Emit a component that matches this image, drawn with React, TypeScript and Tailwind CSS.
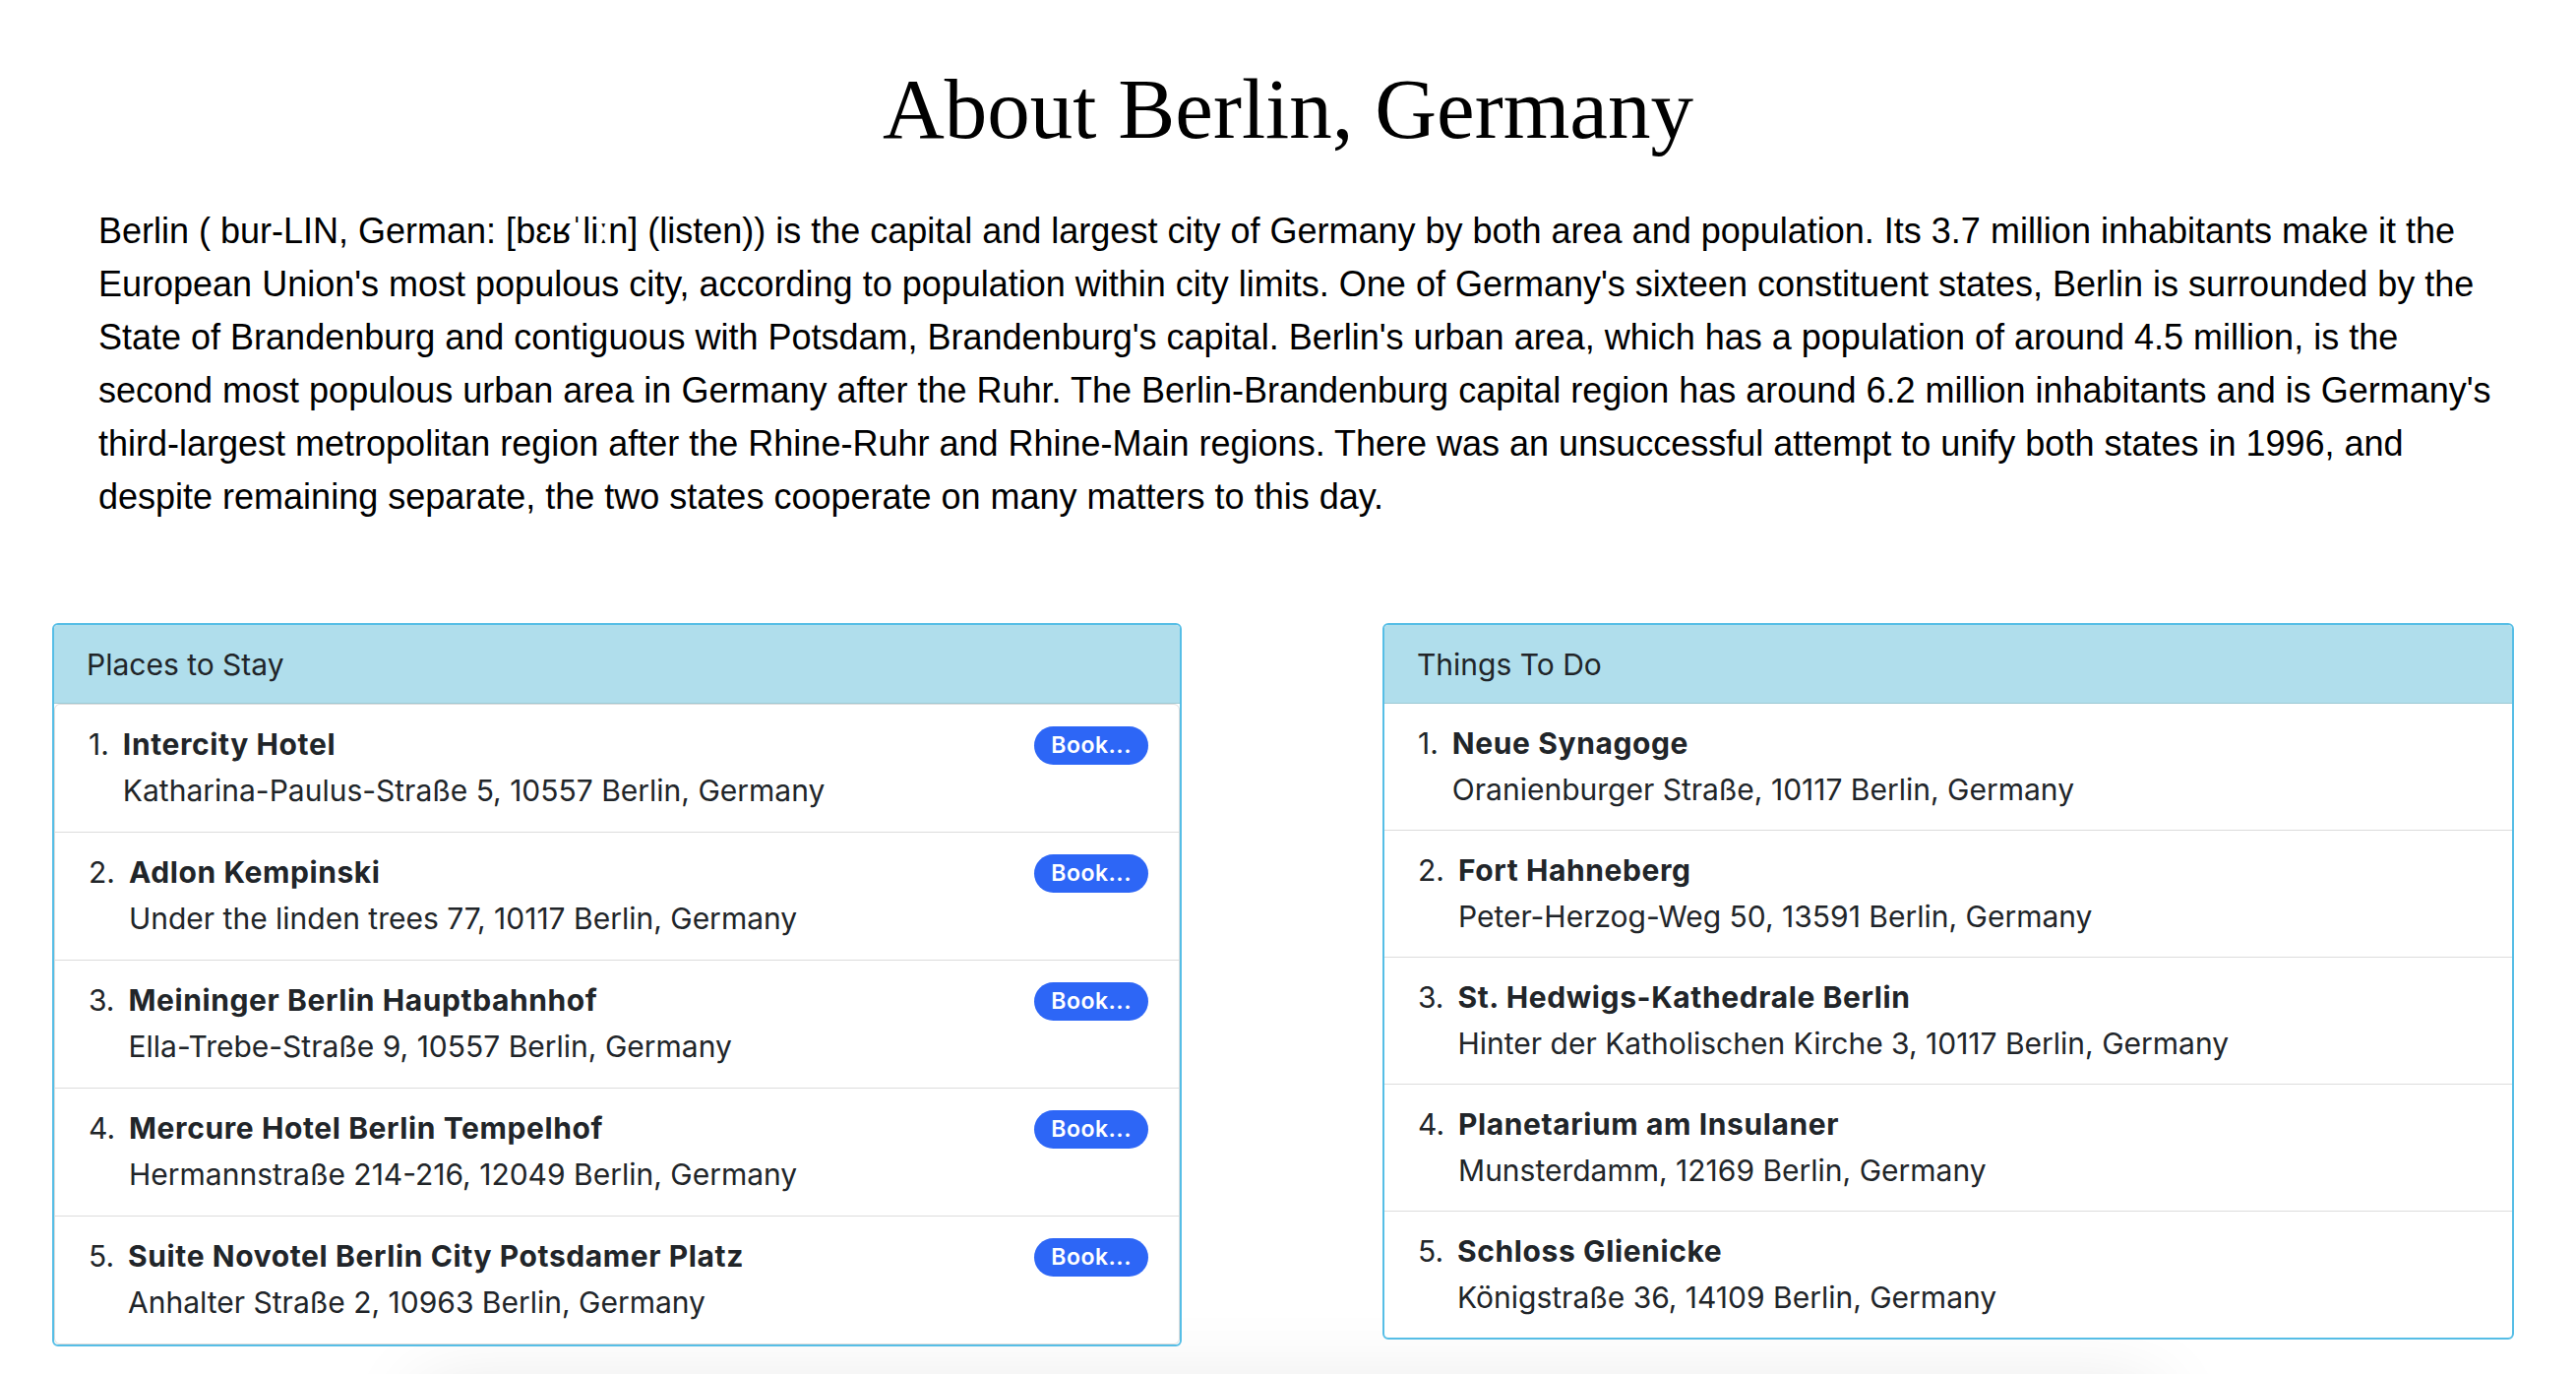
const places = [
  { name: "Intercity Hotel", address: "Katharina-Paulus-Straße 5, 10557 Berlin, Germany" },
  { name: "Adlon Kempinski", address: "Under the linden trees 77, 10117 Berlin, Germany" },
  { name: "Meininger Berlin Hauptbahnhof", address: "Ella-Trebe-Straße 9, 10557 Berlin, Germany" },
  { name: "Mercure Hotel Berlin Tempelhof", address: "Hermannstraße 214-216, 12049 Berlin, Germany" },
  { name: "Suite Novotel Berlin City Potsdamer Platz", address: "Anhalter Straße 2, 10963 Berlin, Germany" },
];

const things = [
  { name: "Neue Synagoge", address: "Oranienburger Straße, 10117 Berlin, Germany" },
  { name: "Fort Hahneberg", address: "Peter-Herzog-Weg 50, 13591 Berlin, Germany" },
  { name: "St. Hedwigs-Kathedrale Berlin", address: "Hinter der Katholischen Kirche 3, 10117 Berlin, Germany" },
  { name: "Planetarium am Insulaner", address: "Munsterdamm, 12169 Berlin, Germany" },
  { name: "Schloss Glienicke", address: "Königstraße 36, 14109 Berlin, Germany" },
];

interface Item {
  name: string;
  address: string;
}

const ListRow = ({ index, item, book }: { index: number; item: Item; book?: boolean }) => {
  return (
    <li
      className={
        "flex items-start justify-between pl-[34px] pr-[31px] pt-[17px] border-b border-[#dcdcdc] last:border-b-0 " +
        (book ? "pb-[18px]" : "pb-[17px]")
      }
    >
      <div className="flex gap-[14px] text-[30px] leading-[47px] text-[#212529]">
        <span>{index}.</span>
        <div className="flex flex-col">
          <span className="font-bold tracking-[0.6px]">{item.name}</span>
          <span>{item.address}</span>
        </div>
      </div>
      {book && (
        <button className="mt-[5px] h-[39px] px-[17px] rounded-full bg-[#2d66f6] text-white text-[23px] font-semibold tracking-[0.5px] leading-none">
          Book...
        </button>
      )}
    </li>
  );
};

const Card = ({ title, items, book, width }: { title: string; items: Item[]; book?: boolean; width: string }) => {
  return (
    <div className={"border-2 border-[#56bee6] rounded-[6px] bg-white overflow-hidden " + width}>
      <div className="bg-[#b0deec] border-b border-[#9cc9d4] pl-[33px] pt-[20px] pb-[19px] text-[30px] leading-[40px] text-[#212529]">
        {title}
      </div>
      <ol className={book ? "border border-[#dcdcdc] rounded-[6px]" : ""}>
        {items.map((item, i) => (
          <ListRow key={item.name} index={i + 1} item={item} book={book} />
        ))}
      </ol>
    </div>
  );
};

export default function App() {
  return (
    <div className="min-h-screen bg-white overflow-hidden font-['Inter',sans-serif]">
      <h1 className="pt-[67px] text-center text-[87px] leading-[87px] text-black font-['Liberation_Serif',serif]">
        About Berlin, Germany
      </h1>
      <p className="mt-[54px] pl-[100px] pr-[78px] text-[36px] leading-[54px] text-black font-['Liberation_Sans',Arial,sans-serif]">
        Berlin ( bur-LIN, German: [bɛʁˈliːn] (listen)) is the capital and largest city of Germany by both area and
        population. Its 3.7 million inhabitants make it the European Union's most populous city, according to
        population within city limits. One of Germany's sixteen constituent states, Berlin is surrounded by the State
        of Brandenburg and contiguous with Potsdam, Brandenburg's capital. Berlin's urban area, which has a population
        of around 4.5 million, is the second most populous urban area in Germany after the Ruhr. The
        Berlin-Brandenburg capital region has around 6.2 million inhabitants and is Germany's third-largest
        metropolitan region after the Rhine-Ruhr and Rhine-Main regions. There was an unsuccessful attempt to unify
        both states in 1996, and despite remaining separate, the two states cooperate on many matters to this day.
      </p>
      <div className="mt-[101px] flex items-start gap-[204px] pl-[53px]">
        <Card title="Places to Stay" items={places} book width="w-[1148px]" />
        <Card title="Things To Do" items={things} width="w-[1150px]" />
      </div>
      <div className="mx-auto mt-[40px] h-[200px] w-[1766px] bg-white shadow-[0_0_80px_rgba(0,0,0,0.1)]" />
    </div>
  );
}
